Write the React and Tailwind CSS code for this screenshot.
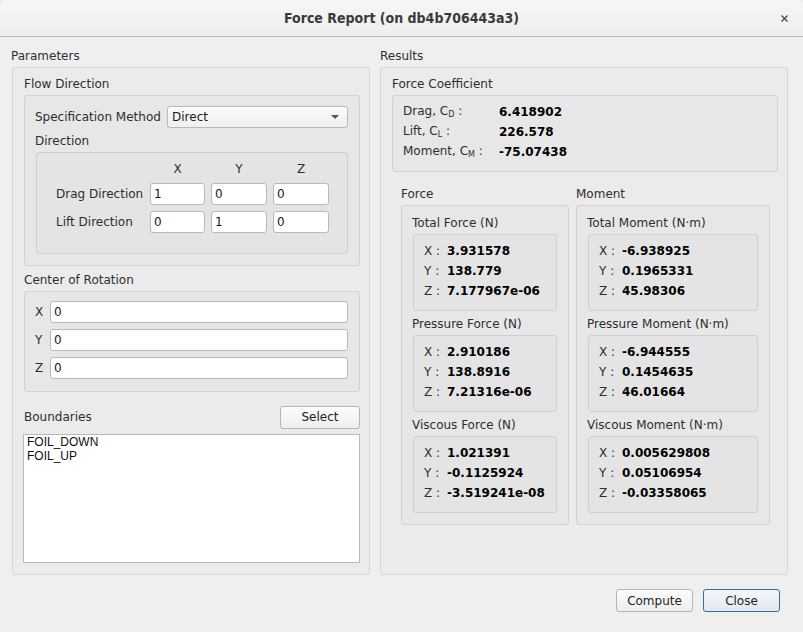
import React from "react";

const L1 = "rounded-[3px] border border-[#d6d6d6] bg-[#ebebeb]";
const L2 = "rounded-[3px] border border-[#d2d2d2] bg-[#e7e7e7]";
const L3 = "rounded-[3px] border border-[#cfcfcf] bg-[#e4e4e4]";

const Field = ({ value, className = "" }) => (
  <div
    className={`h-[22px] rounded-[3px] border border-[#b9b9b9] bg-white pl-[3px] leading-[20px] text-[#1a1a1a] ${className}`}
  >
    {value}
  </div>
);

const Sub = ({ base, sub }) => (
  <span>
    {base}
    <span className="relative top-[2px] text-[8px]">{sub}</span>
  </span>
);

const ValueBox = ({ title, rows, className = "" }) => (
  <div>
    <div className="h-[16px] leading-[16px] text-[#2e2e2e]">{title}</div>
    <div className={`${L3} mt-[3px] h-[77px] pl-[10px] pt-[6px] ${className}`}>
      {rows.map(([k, v]) => (
        <div key={k} className="flex h-[20px] items-center">
          <span className="w-[23px] text-[#2e2e2e]">{k} :</span>
          <span className="font-bold text-black">{v}</span>
        </div>
      ))}
    </div>
  </div>
);

const Button = ({ children, primary, className = "w-[77px]" }) => (
  <button
    className={`h-[23px] rounded-[3px] border text-[12px] ${className} ${
      primary
        ? "border-[#2f6fa7] bg-gradient-to-b from-[#f4f7fa] to-[#e2e8ef]"
        : "border-[#b5b5b5] bg-gradient-to-b from-[#fcfcfc] to-[#eeeeee]"
    } text-[#222]`}
  >
    {children}
  </button>
);

export default function App() {
  return (
    <div className="flex h-[632px] w-[803px] flex-col overflow-hidden bg-[#efefef] font-['DejaVu_Sans',sans-serif] text-[12px] text-[#2e2e2e]">
      {/* Title bar */}
      <div className="relative flex h-[37px] shrink-0 items-center justify-center rounded-t-[6px] border-b border-[#b9b9b9] bg-gradient-to-b from-[#f6f6f6] to-[#eeeeee]">
        <span className="font-['DejaVu_Sans_Condensed',sans-serif] text-[14px] font-bold text-[#3a3a3a]">
          Force Report (on db4b706443a3)
        </span>
        <svg className="absolute right-[15px] top-[15px]" width="7" height="7" viewBox="0 0 7 7">
          <path d="M0.5 0.5 L6.5 6.5 M6.5 0.5 L0.5 6.5" stroke="#3c3c3c" strokeWidth="1.1" />
        </svg>
      </div>

      {/* Body */}
      <div className="flex gap-[10px] pl-[11px] pt-[10px]">
        {/* Parameters */}
        <div className="w-[359px]">
          <div className="h-[18px] leading-[18px]">Parameters</div>
          <div className={`${L1} ml-[1px] mt-[2px] h-[508px] pl-[11px] pr-[9px] pt-[8px]`}>
            <div className="h-[16px] leading-[17px]">Flow Direction</div>
            <div className={`${L2} mt-[3px] h-[171px] pl-[10px] pr-[11px] pt-[10px]`}>
              <div className="flex h-[22px] items-center">
                <span className="w-[132px]">Specification Method</span>
                <div className="flex h-[22px] flex-1 items-center justify-between rounded-[3px] border border-[#b9b9b9] bg-gradient-to-b from-[#fbfbfb] to-[#f0f0f0] pl-[4px] pr-[8px] text-[#1a1a1a]">
                  <span>Direct</span>
                  <svg width="8" height="4" viewBox="0 0 8 4">
                    <path d="M0 0 L8 0 L4 4 Z" fill="#555" />
                  </svg>
                </div>
              </div>
              <div className="mt-[5px] h-[16px] leading-[17px]">Direction</div>
              <div className={`${L3} ml-[1px] mt-[3px] h-[102px] pl-[19px] pt-[8px]`}>
                <div className="flex h-[16px] leading-[16px]">
                  <span className="w-[94px]" />
                  <span className="w-[55px] text-center">X</span>
                  <span className="ml-[6px] w-[56px] text-center">Y</span>
                  <span className="ml-[6px] w-[56px] text-center">Z</span>
                </div>
                {[
                  ["Drag Direction", "1", "0", "0"],
                  ["Lift Direction", "0", "1", "0"],
                ].map(([label, x, y, z]) => (
                  <div key={label} className="mt-[6px] flex items-center">
                    <span className="w-[94px]">{label}</span>
                    <Field value={x} className="w-[55px]" />
                    <Field value={y} className="ml-[6px] w-[56px]" />
                    <Field value={z} className="ml-[6px] w-[56px]" />
                  </div>
                ))}
              </div>
            </div>

            <div className="mt-[6px] h-[16px] leading-[16px]">Center of Rotation</div>
            <div className={`${L2} mt-[3px] h-[101px] pl-[10px] pr-[11px] pt-[9px]`}>
              {["X", "Y", "Z"].map((k, i) => (
                <div key={k} className={`flex items-center ${i ? "mt-[6px]" : ""}`}>
                  <span className="w-[15px]">{k}</span>
                  <Field value="0" className="flex-1" />
                </div>
              ))}
            </div>

            <div className="mt-[14px] flex h-[22px] items-center justify-between">
              <span>Boundaries</span>
              <Button className="w-[80px]">Select</Button>
            </div>
            <div className="-ml-[1px] mt-[6px] h-[129px] border border-[#b9b9b9] bg-white pl-[3px] font-['Liberation_Sans',sans-serif] text-[12px] leading-[14px] text-[#111]">
              <div>FOIL_DOWN</div>
              <div>FOIL_UP</div>
            </div>
          </div>
        </div>

        {/* Results */}
        <div className="w-[408px]">
          <div className="h-[18px] leading-[18px]">Results</div>
          <div className={`${L1} mt-[2px] h-[508px] pl-[11px] pr-[9px] pt-[8px]`}>
            <div className="h-[16px] leading-[17px]">Force Coefficient</div>
            <div className={`${L2} mt-[3px] h-[77px] pl-[10px] pt-[6px]`}>
              {[
                [<Sub base="Drag, C" sub="D" />, "6.418902"],
                [<Sub base="Lift, C" sub="L" />, "226.578"],
                [<Sub base="Moment, C" sub="M" />, "-75.07438"],
              ].map(([k, v], i) => (
                <div key={i} className="flex h-[20px] items-center leading-[21px]">
                  <span className="w-[96px]">
                    {k} :
                  </span>
                  <span className="font-bold text-black">{v}</span>
                </div>
              ))}
            </div>

            <div className="ml-[9px] mt-[14px] flex gap-[8px]">
              <div className="w-[168px]">
                <div className="h-[16px] leading-[17px]">Force</div>
                <div className={`${L2} mt-[3px] flex h-[320px] flex-col gap-[5px] pl-[10px] pr-[11px] pt-[9px]`}>
                  <ValueBox
                    title="Total Force (N)"
                    rows={[["X", "3.931578"], ["Y", "138.779"], ["Z", "7.177967e-06"]]}
                    className="ml-[1px]"
                  />
                  <ValueBox
                    title="Pressure Force (N)"
                    rows={[["X", "2.910186"], ["Y", "138.8916"], ["Z", "7.21316e-06"]]}
                    className="ml-[1px]"
                  />
                  <ValueBox
                    title="Viscous Force (N)"
                    rows={[["X", "1.021391"], ["Y", "-0.1125924"], ["Z", "-3.519241e-08"]]}
                    className="ml-[1px]"
                  />
                </div>
              </div>
              <div className="-ml-[1px] w-[194px]">
                <div className="h-[16px] leading-[17px]">Moment</div>
                <div className={`${L2} mt-[3px] flex h-[320px] flex-col gap-[5px] pl-[10px] pr-[11px] pt-[9px]`}>
                  <ValueBox
                    title="Total Moment (N·m)"
                    rows={[["X", "-6.938925"], ["Y", "0.1965331"], ["Z", "45.98306"]]}
                    className="ml-[1px]"
                  />
                  <ValueBox
                    title="Pressure Moment (N·m)"
                    rows={[["X", "-6.944555"], ["Y", "0.1454635"], ["Z", "46.01664"]]}
                    className="ml-[1px]"
                  />
                  <ValueBox
                    title="Viscous Moment (N·m)"
                    rows={[["X", "0.005629808"], ["Y", "0.05106954"], ["Z", "-0.03358065"]]}
                    className="ml-[1px]"
                  />
                </div>
              </div>
            </div>
          </div>
        </div>
      </div>

      {/* Footer buttons */}
      <div className="mt-[14px] flex justify-end gap-[10px] pr-[23px]">
        <Button>Compute</Button>
        <Button primary>Close</Button>
      </div>
    </div>
  );
}
